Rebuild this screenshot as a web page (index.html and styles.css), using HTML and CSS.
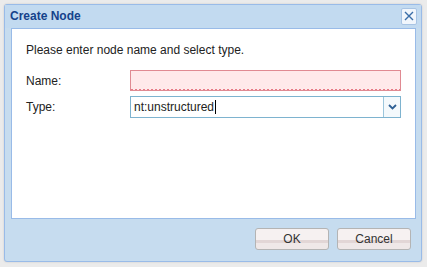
FILE: index.html
```html
<!DOCTYPE html>
<html>
<head>
<meta charset="utf-8">
<link rel="stylesheet" href="styles.css">
</head>
<body>
<div class="window">
  <div class="titlebar">
    <span class="title">Create Node</span>
    <span class="close"><svg width="10" height="10" viewBox="0 0 10 10"><path d="M1 1 L9 9 M9 1 L1 9" stroke="#3a6ea8" stroke-width="1.4" fill="none"/></svg></span>
  </div>
  <div class="body">
    <div class="panel">
      <div class="intro">Please enter node name and select type.</div>
      <div class="row">
        <label class="label">Name:</label>
        <div class="input invalid"></div>
      </div>
      <div class="row">
        <label class="label">Type:</label>
        <div class="input combo"><span class="value">nt:unstructured</span><span class="caret"></span><span class="trigger"><svg width="9" height="6" viewBox="0 0 9 6"><path d="M1 1 L4.5 4.5 L8 1" stroke="#2d5f94" stroke-width="1.8" fill="none"/></svg></span></div>
      </div>
    </div>
    <div class="footer">
      <button class="btn">OK</button>
      <button class="btn">Cancel</button>
    </div>
  </div>
</div>
</body>
</html>
```
FILE: styles.css
```css
html, body { margin: 0; padding: 0; }
body {
  background: #ebebeb;
  width: 427px;
  height: 267px;
  overflow: hidden;
  font-family: "Liberation Sans", Arial, sans-serif;
}
.window {
  margin: 4px 0 0 4px;
  width: 416px;
  height: 256px;
  border: 1px solid #99bbe8;
  border-radius: 3px;
  background: #c6dcef;
  display: flex;
  flex-direction: column;
  box-shadow: 0 0 2px rgba(0,0,0,0.15);
}
.titlebar {
  height: 23px;
  flex: none;
  display: flex;
  align-items: center;
  justify-content: space-between;
  padding: 0 4px 1px 5px;
  box-sizing: border-box;
  background: #c2daf0;
}
.title {
  font-weight: bold;
  font-size: 12px;
  color: #15428b;
}
.close {
  width: 14px;
  height: 15px;
  border: 1px solid #a8c4e4;
  border-radius: 2px;
  background: #f1f6fc;
  display: flex;
  align-items: center;
  justify-content: center;
}
.body {
  flex: 1;
  display: flex;
  flex-direction: column;
  padding: 0 5px 0 6px;
}
.panel {
  height: 191px;
  flex: none;
  box-sizing: border-box;
  background: #fff;
  border: 1px solid #99bbe8;
  padding: 12px 14px 0 14px;
  font-size: 12px;
  color: #222;
}
.intro { height: 18px; line-height: 18px; margin-bottom: 11px; }
.row { display: flex; align-items: center; margin-bottom: 5px; }
.label { width: 104px; }
.input {
  width: 269px;
  height: 19px;
  border: 1px solid #7eb3cf;
  background: #fff;
  box-sizing: content-box;
}
.invalid {
  border-color: #e08a92;
  background: #ffe9ea;
  background-image: repeating-linear-gradient(90deg, #e77a86 0 2px, transparent 2px 4px);
  background-size: 100% 1px;
  background-position: 0 100%;
  background-repeat: no-repeat;
}
.combo {
  display: flex;
  align-items: center;
  height: 20px;
}
.value { padding-left: 3px; }
.caret { width: 1px; height: 14px; background: #000; margin-left: 1px; }
.trigger {
  margin-left: auto;
  width: 16px;
  height: 20px;
  border-left: 1px solid #9cc6dc;
  background: #f4f9fc;
  display: flex;
  align-items: center;
  justify-content: center;
}
.footer {
  flex: 1;
  display: flex;
  justify-content: flex-end;
  align-items: flex-start;
  gap: 8px;
  padding: 9px 5px 0 0;
}
.btn {
  width: 74px;
  height: 22px;
  border: 1px solid #b4b4b4;
  border-radius: 3px;
  background: linear-gradient(#f6f1f1 0 55%, #e2d6d6 55% 70%, #efe8e8 70%);
  font-family: "Liberation Sans", Arial, sans-serif;
  font-size: 12px;
  color: #333;
  padding: 0;
}
```
